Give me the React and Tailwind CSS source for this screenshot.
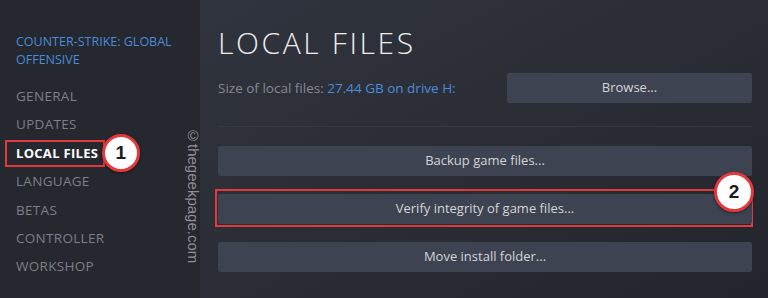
import React from 'react';

const navItems = ['GENERAL', 'UPDATES', 'LOCAL FILES', 'LANGUAGE', 'BETAS', 'CONTROLLER', 'WORKSHOP'];

const Badge = ({ n, className = '' }) => (
    <span
        className={`absolute flex items-center justify-center rounded-full bg-white border-[3px] border-[#e5383b] text-[#1c1c1c] font-bold text-[19px] font-['Liberation_Sans',sans-serif] shadow-[0_1px_3px_rgba(0,0,0,0.5)] ${className}`}
    >
        {n}
    </span>
);

const SteamButton = ({ children, className = '' }) => (
    <button className={`w-full h-[30px] rounded-[2px] bg-[#3d4350] text-[13px] text-[#d3d5d9] ${className}`}>
        {children}
    </button>
);

export default function App() {
    return (
        <div className="flex w-[768px] h-[298px] overflow-hidden bg-[#23262d] font-['Open_Sans',sans-serif]">
            {/* Sidebar */}
            <aside className="relative w-[200px] shrink-0 bg-[#25282f] pt-[33px] pl-[16px]">
                <p className="text-[12.5px] leading-[18px] text-[#4b8bd8] uppercase">
                    Counter-Strike: Global
                    <br />
                    Offensive
                </p>
                <ul className="mt-[13px]">
                    {navItems.map((item) => {
                        const active = item === 'LOCAL FILES';
                        return (
                            <li
                                key={item}
                                className={`relative h-[28.4px] leading-[28.4px] tracking-[0.3px] ${
                                    active ? 'text-white font-bold text-[13px]' : 'text-[#7c7f87] text-[13.5px]'
                                }`}
                            >
                                {active && (
                                    <span className="absolute left-[-11px] top-[1px] w-[100px] h-[27px] border-2 border-[#e5383b]" />
                                )}
                                <span className="relative">{item}</span>
                                {active && <Badge n="1" className="left-[86px] top-[-5px] w-[38px] h-[38px]" />}
                            </li>
                        );
                    })}
                </ul>
                {/* watermark */}
                <span className="absolute left-[181px] top-[127px] [writing-mode:vertical-rl] text-[15px] text-[#8d9097] font-['Liberation_Sans',sans-serif]">
                    ©thegeekpage.com
                </span>
            </aside>

            {/* Main panel */}
            <main className="flex-1 bg-gradient-to-br from-[#30343e] via-[#2a2d35] to-[#22252b] pl-[18px] pr-[16px] pt-[25px]">
                <h1 className="text-[30px] leading-[36px] font-light tracking-[2.6px] text-[#ececec]">LOCAL FILES</h1>
                <div className="mt-[12px] flex items-center justify-between">
                    <p className="text-[13.5px] text-[#868991]">
                        Size of local files: <span className="text-[#4b8bd8]">27.44 GB on drive H:</span>
                    </p>
                    <SteamButton className="!w-[245px]">Browse...</SteamButton>
                </div>
                <div className="mt-[23px] h-px bg-[#353942]" />
                <div className="mt-[19px] flex flex-col gap-[18px]">
                    <SteamButton>Backup game files...</SteamButton>
                    <div className="relative">
                        <span className="absolute -left-[3px] -right-[1px] -top-[5px] -bottom-[3px] border-2 border-[#e5383b]" />
                        <SteamButton className="relative">Verify integrity of game files...</SteamButton>
                        <Badge n="2" className="right-[-2px] top-[-22px] w-[40px] h-[40px]" />
                    </div>
                    <SteamButton>Move install folder...</SteamButton>
                </div>
            </main>
        </div>
    );
}
